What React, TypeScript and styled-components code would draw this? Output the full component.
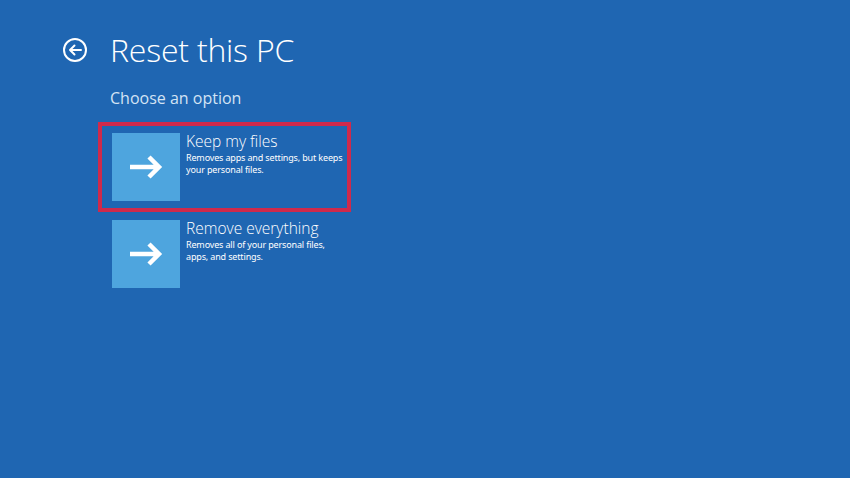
import React from 'react'
import styled, { createGlobalStyle } from 'styled-components'

const GlobalStyle = createGlobalStyle`
  html, body {
    margin: 0;
    padding: 0;
    background: #1f66b2;
  }
  body {
    font-family: 'Open Sans', 'Noto Sans', sans-serif;
    color: #ffffff;
  }
`

const Screen = styled.div`
  width: 850px;
  height: 478px;
  box-sizing: border-box;
  padding: 30px 0 0 62px;
  background: #1f66b2;
  overflow: hidden;
`

const Header = styled.header`
  display: flex;
  align-items: center;
  gap: 22px;
  height: 40px;
`

const BackButton = styled.button`
  width: 26px;
  height: 26px;
  padding: 0;
  border: none;
  background: none;
  display: flex;
  color: #ffffff;
`

const Title = styled.h1`
  margin: 0;
  font-weight: 300;
  font-size: 32px;
  line-height: 40px;
  letter-spacing: -0.2px;
`

const Body = styled.main`
  padding-left: 36px;
`

const Subtitle = styled.h2`
  margin: 18px 0 14px 12px;
  font-weight: 400;
  font-size: 16px;
  line-height: 20px;
  color: #d3e3f4;
`

const OptionList = styled.ul`
  list-style: none;
  margin: 0;
  padding: 4px 0 0 4px;
  display: flex;
  flex-direction: column;
  gap: 5px;
`

const Option = styled.li<{ $selected?: boolean }>`
  display: flex;
  align-items: flex-start;
  width: 225px;
  padding: 7px 10px;
  outline: ${(p) => (p.$selected ? '4px solid #cf2a4c' : 'none')};
`

const Tile = styled.div`
  width: 68px;
  height: 68px;
  flex: none;
  background: #4ea5de;
  display: flex;
  align-items: center;
  justify-content: center;
`

const OptionText = styled.div`
  margin-left: 6px;
  margin-top: -3px;
  white-space: nowrap;
`

const OptionTitle = styled.div`
  font-weight: 300;
  font-size: 15.5px;
  line-height: 22px;
`

const OptionDesc = styled.div`
  font-family: 'Noto Sans', 'Open Sans', sans-serif;
  font-size: 9px;
  line-height: 12px;
  letter-spacing: -0.15px;
`

const BackIcon = () => (
  <svg width="26" height="26" viewBox="0 0 26 26" fill="none" stroke="currentColor">
    <circle cx="13" cy="13" r="11" strokeWidth="2" />
    <path d="M19 13H8M12.5 8.5L8 13l4.5 4.5" strokeWidth="2" strokeLinecap="round" strokeLinejoin="round" />
  </svg>
)

const ArrowIcon = () => (
  <svg width="36" height="26" viewBox="0 0 36 26" fill="none" stroke="#ffffff">
    <path d="M2 13h29M21 3l10 10-10 10" strokeWidth="4.5" strokeLinejoin="miter" />
  </svg>
)

const options = [
  {
    title: 'Keep my files',
    lines: ['Removes apps and settings, but keeps', 'your personal files.'],
    selected: true
  },
  {
    title: 'Remove everything',
    lines: ['Removes all of your personal files,', 'apps, and settings.'],
    selected: false
  }
]

const App = () => (
  <>
    <GlobalStyle />
    <Screen>
      <Header>
        <BackButton aria-label="Back">
          <BackIcon />
        </BackButton>
        <Title>Reset this PC</Title>
      </Header>
      <Body>
        <Subtitle>Choose an option</Subtitle>
        <OptionList>
          {options.map((opt) => (
            <Option key={opt.title} $selected={opt.selected}>
              <Tile>
                <ArrowIcon />
              </Tile>
              <OptionText>
                <OptionTitle>{opt.title}</OptionTitle>
                <OptionDesc>
                  {opt.lines[0]}
                  <br />
                  {opt.lines[1]}
                </OptionDesc>
              </OptionText>
            </Option>
          ))}
        </OptionList>
      </Body>
    </Screen>
  </>
)

export default App
